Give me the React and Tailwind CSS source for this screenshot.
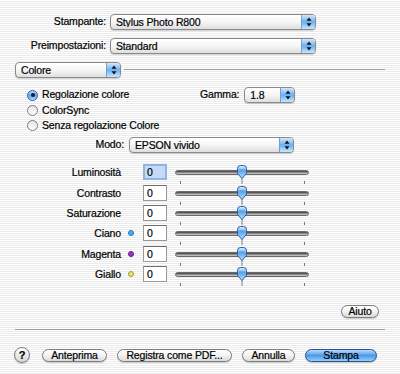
import React from "react";

function Arrows() {
  return (
    <svg width="6" height="10" viewBox="0 0 6 10">
      <path d="M3 0.5 L5.5 3.8 L0.5 3.8 Z" fill="#111" />
      <path d="M3 9.5 L5.5 6.2 L0.5 6.2 Z" fill="#111" />
    </svg>
  );
}

function Popup({ value, className }) {
  return (
    <div
      className={`flex items-center h-[16px] rounded-[4px] border border-[#8a8a8a] bg-gradient-to-b from-white via-[#f6f6f6] to-[#dedede] shadow-[0_1px_1px_rgba(0,0,0,0.18)] ${className}`}
    >
      <span className="flex-1 pl-[5px] leading-none truncate">{value}</span>
      <span className="w-[14px] h-full rounded-r-[3px] border-l border-[#7a9cd0] bg-gradient-to-b from-[#d3e9fd] via-[#6aaef1] to-[#c4e9ff] flex items-center justify-center">
        <Arrows />
      </span>
    </div>
  );
}

function Radio({ checked, label }) {
  return (
    <div className="flex items-center h-[15px]">
      <span
        className={`w-[11px] h-[11px] rounded-full border flex items-center justify-center ${
          checked
            ? "border-[#3a5f9c] bg-gradient-to-b from-[#b9dcfb] via-[#5ea6ec] to-[#a9dbff]"
            : "border-[#7e7e7e] bg-gradient-to-b from-[#e4e4e4] to-white"
        }`}
      >
        {checked && <span className="w-[4px] h-[4px] rounded-full bg-[#101d3a]" />}
      </span>
      <span className="ml-[4px]">{label}</span>
    </div>
  );
}

function Thumb() {
  return (
    <svg width="12" height="19" viewBox="0 0 12 19">
      <defs>
        <linearGradient id="tg" x1="0" y1="0" x2="0" y2="1">
          <stop offset="0" stopColor="#e0f0ff" />
          <stop offset="0.45" stopColor="#5ea8ee" />
          <stop offset="1" stopColor="#b8e4ff" />
        </linearGradient>
      </defs>
      <line x1="6" y1="13" x2="6" y2="19" stroke="#7a7a7a" strokeWidth="1" />
      <path
        d="M1.5 3.5 Q1.5 0.5 4.5 0.5 H7.5 Q10.5 0.5 10.5 3.5 V8.5 L6 13.5 L1.5 8.5 Z"
        fill="url(#tg)"
        stroke="#2e5ba6"
        strokeWidth="1"
      />
      <line x1="3" y1="5" x2="9" y2="5" stroke="#3f78c4" strokeWidth="0.6" />
    </svg>
  );
}

function SliderRow({ label, dot, focused, height }) {
  return (
    <div className={`flex items-start ${height}`}>
      <div className="w-[121px] text-right leading-[16px]">{label}</div>
      <div className="w-[22px] h-[16px] flex items-center pl-[7px]">
        {dot && <span className={`w-[6px] h-[6px] rounded-full ${dot}`} />}
      </div>
      {focused ? (
        <div className="w-[24px] h-[16px] border-2 border-[#90b4e8] bg-[#c7daf5] leading-[12px] pl-[2px]">0</div>
      ) : (
        <div className="w-[24px] h-[16px] border border-[#9a9a9a] border-t-[#6e6e6e] bg-white leading-[14px] pl-[3px]">0</div>
      )}
      <div className="relative ml-[8px] w-[134px] h-[20px]">
        <div className="absolute left-0 right-0 top-[6px] h-[5px] rounded-full bg-gradient-to-b from-[#3e3e3e] via-[#8a8a8a] to-[#d6d6d6] border border-[#6a6a6a]" />
        <div className="absolute left-[5px] top-[17px] w-px h-[3px] bg-[#777]" />
        <div className="absolute left-[129px] top-[17px] w-px h-[3px] bg-[#777]" />
        <div className="absolute left-[61px] top-[1px]">
          <Thumb />
        </div>
      </div>
    </div>
  );
}

function Button({ label, className, primary }) {
  return (
    <div
      className={`h-[13px] rounded-full border flex items-center justify-center leading-none shadow-[0_1px_1px_rgba(0,0,0,0.2)] ${
        primary
          ? "border-[#2f4f8e] bg-gradient-to-b from-[#b8dcfb] via-[#4c9ae6] to-[#93d0fb]"
          : "border-[#7c7c7c] bg-gradient-to-b from-white via-[#f2f2f2] to-[#d9d9d9]"
      } ${className}`}
    >
      {label}
    </div>
  );
}

export default function App() {
  const rows = [
    { label: "Luminosità", focused: true, height: "h-[21px]" },
    { label: "Contrasto", height: "h-[20px]" },
    { label: "Saturazione", height: "h-[20px]" },
    { label: "Ciano", dot: "bg-[#3fb2f2] border border-[#2a78b8]", height: "h-[21px]" },
    { label: "Magenta", dot: "bg-[#9c34c4] border border-[#6a1e88]", height: "h-[20px]" },
    { label: "Giallo", dot: "bg-[#ece468] border border-[#a09a30]", height: "h-[20px]" },
  ];

  return (
    <div className="w-[400px] h-[374px] overflow-hidden bg-[repeating-linear-gradient(to_bottom,#ffffff_0px,#ffffff_1px,#ebebeb_1px,#ebebeb_2px)] font-[Liberation_Sans,Arial,sans-serif] text-[10.5px] tracking-[-0.15px] [-webkit-text-stroke:0.2px_#000] text-black">
      <div className="pt-[14px]">
        {/* printer + presets */}
        <div className="flex items-center h-[16px]">
          <div className="w-[106px] text-right">Stampante:</div>
          <Popup value="Stylus Photo R800" className="ml-[4px] w-[206px]" />
        </div>
        <div className="flex items-center h-[16px] mt-[8px]">
          <div className="w-[106px] text-right">Preimpostazioni:</div>
          <Popup value="Standard" className="ml-[4px] w-[206px]" />
        </div>

        {/* pane selector */}
        <div className="flex items-center h-[16px] mt-[8px] pl-[15px] pr-[15px]">
          <Popup value="Colore" className="w-[106px]" />
          <div className="flex-1 ml-[3px] h-[2px] border-t border-[#9c9c9c] border-b-white border-b" />
        </div>

        {/* color mode radios */}
        <div className="mt-[9px] pl-[27px]">
          <div className="flex items-center">
            <div className="w-[173px]">
              <Radio checked label="Regolazione colore" />
            </div>
            <span>Gamma:</span>
            <Popup value="1.8" className="ml-[5px] w-[51px]" />
          </div>
          <Radio label="ColorSync" />
          <Radio label="Senza regolazione Colore" />
        </div>

        <div className="flex items-center h-[16px] mt-[4px]">
          <div className="w-[124px] text-right">Modo:</div>
          <Popup value="EPSON vivido" className="ml-[5px] w-[165px]" />
        </div>

        {/* sliders */}
        <div className="mt-[11px]">
          {rows.map((r) => (
            <SliderRow key={r.label} {...r} />
          ))}
        </div>

        <div className="flex justify-end pr-[21px] mt-[19px]">
          <Button label="Aiuto" className="w-[38px]" />
        </div>

        <div className="mx-[15px] mt-[11px] h-[2px] border-t border-[#9c9c9c] border-b border-b-white" />

        {/* bottom buttons */}
        <div className="flex items-center mt-[16px] pl-[14px]">
          <div className="w-[16px] h-[16px] rounded-full border border-[#7c7c7c] bg-gradient-to-b from-white to-[#d6d6d6] flex items-center justify-center text-[11px] font-bold leading-none shadow-[0_1px_1px_rgba(0,0,0,0.2)]">
            ?
          </div>
          <Button label="Anteprima" className="ml-[12px] w-[65px]" />
          <Button label="Registra come PDF..." className="ml-[10px] w-[115px]" />
          <Button label="Annulla" className="ml-[10px] w-[53px]" />
          <Button label="Stampa" primary className="ml-[10px] w-[72px]" />
        </div>
      </div>
    </div>
  );
}
